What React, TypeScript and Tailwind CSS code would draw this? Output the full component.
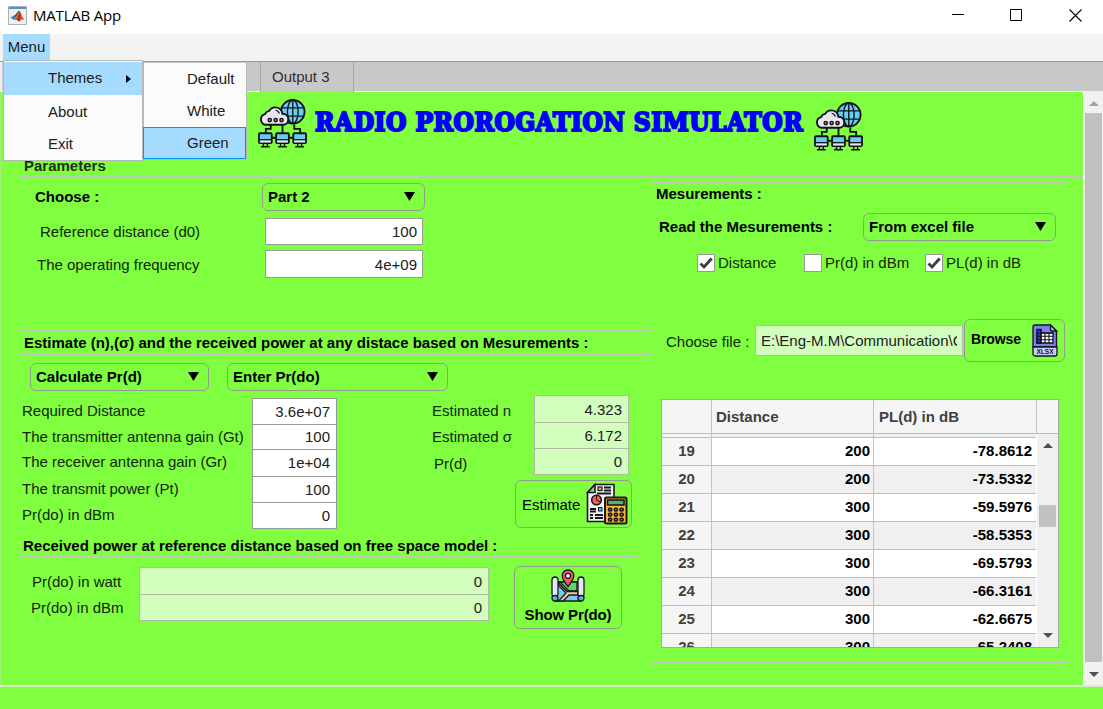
import type { ReactNode } from "react";

function NetworkIcon() {
  return (
    <svg width="49" height="49" viewBox="0 0 50 50" fill="none" stroke="#101418" strokeWidth="1.900" className="block">
      <circle cx="35.5" cy="13" r="12" fill="#68cdf0" />
      <ellipse cx="35.5" cy="13" rx="5.5" ry="12" strokeWidth="1.400" />
      <path d="M35.500 1v24M24 9h23M24 17.500h23" strokeWidth="1.400" />
      <path d="M8 26.300a5.500 5.500 0 0 1-.8-10.800 5.200 5.200 0 0 1 4.300-3.400c1.200-2.300 3.400-3.600 6-3.600 4.200 0 7 2.800 7.400 6.600 3.600 0 6 2.300 6 5.600 0 3.300-2.300 5.600-5.200 5.600z" fill="#e6e6f0" />
      <path d="M18 11.500c2 .3 3.300 1.500 3.800 3.500" strokeWidth="1.200" />
      <g fill="#e8685a" strokeWidth="1.400">
        <circle cx="12" cy="21.500" r="1.700" />
        <circle cx="18" cy="21.500" r="1.700" />
        <circle cx="24" cy="21.500" r="1.700" />
      </g>
      <path d="M13 26.500v4H8v5M25 26v9M37 26v4.500h6V35M14 39.500h24" />
      {[1, 18.5, 36].map((x) => (
        <g key={x}>
          <rect x={x} y="35" width="13" height="10" rx="1" fill="#68cdf0" />
          <path d={`M${x + 0.9} 42h11.200v2.300h-11.200z`} fill="#e6e6f0" stroke="none" />
          <path d={`M${x} 41.500h13`} strokeWidth="1.300" />
          <path d={`M${x + 4.5} 45v3.500M${x + 8.5} 45v3.500M${x + 2} 48.700h9`} strokeWidth="1.500" />
        </g>
      ))}
    </svg>
  );
}

function ReportIcon() {
  return (
    <svg width="42" height="42" viewBox="0 0 42 42" fill="none" stroke="#18181c" strokeWidth="1.600" className="block">
      <path d="M1.500 9.500 9 1.500h19v37h-26.500z" fill="#f1f1f4" />
      <path d="M1.500 9.500H9v-8z" fill="#b9b9c8" />
      <circle cx="10.500" cy="17" r="4.800" fill="#f25f54" />
      <path d="M10.500 17v-5M10.500 17l4 2" strokeWidth="1" />
      <path d="M18 4.500h7M18 7.500h7M11 10.500h14M4 26h6M4 28.500h6M4 32h3M9 32h8M9 35h8M4 35h3" strokeWidth="1.800" />
      <rect x="12" y="4" width="4" height="3.500" fill="#f0b53d" strokeWidth="1.200" />
      <rect x="12.500" y="24.500" width="3.500" height="3.500" fill="#68b7e6" strokeWidth="1" />
      <rect x="19" y="14.500" width="21.500" height="26" rx="1.500" fill="#f7b93b" strokeWidth="2" />
      <rect x="21.500" y="17" width="16.500" height="5" fill="#5fae6e" />
      {[26.5, 31.5, 36.5].map((y) =>
        [24, 29.8, 35.5].map((x) => (
          <rect key={`${x}-${y}`} x={x - 1.5} y={y - 1.3} width="3.200" height="2.800" rx="1" fill="#8b7444" strokeWidth="1.500" />
        ))
      )}
    </svg>
  );
}

function MapIcon() {
  return (
    <svg width="34" height="34" viewBox="0 0 34 34" fill="none" stroke="#16181d" strokeWidth="1.300" className="block">
      <path d="M4 13h26v19H4z" fill="#6cd0ee" />
      <path d="M8 13h18v9h-8l-8-8z" fill="#5fd46c" />
      <path d="M7 13.500l9 9h11v3.500h-9L12 32H7.500l7.500-8-8-8z" fill="#fac9a2" />
      <rect x="1" y="8" width="6" height="20" rx="3" fill="#e6e6f0" />
      <rect x="27" y="8" width="6" height="20" rx="3" fill="#e6e6f0" />
      <path d="M1 28.500c0 2 1.300 3.500 3 3.500s3-1.300 3-3-1.500-2.500-3-2.500-3 .5-3 2zM33 28.500c0 2-1.300 3.500-3 3.500s-3-1.300-3-3 1.500-2.500 3-2.500 3 .5 3 2z" fill="#4db9e4" />
      <path d="M17 17.500s-5.800-7-5.800-11A5.600 5.600 0 0 1 17 1a5.600 5.600 0 0 1 5.800 5.500c0 4-5.800 11-5.800 11z" fill="#f4536b" />
      <circle cx="17" cy="6.800" r="2.500" fill="#fff" />
    </svg>
  );
}

function XlsxIcon() {
  return (
    <svg width="26" height="33" viewBox="0 0 26 33" fill="none" stroke="#12131c" strokeWidth="1.300" className="block">
      <path d="M1 23V3a2 2 0 0 1 2-2h15.500l6 6v16z" fill="#7a80f0" />
      <path d="M18.500 1v4a2 2 0 0 0 2 2h4z" fill="#c5c8fa" />
      <path d="M5 9h16v10H5z" fill="#fff" />
      <path d="M5 5.500h4V19H5z" fill="#2d36d6" />
      <path d="M5 9h16M5 12.300h16M5 15.700h16M9 5.500V19M13 9v10M17 9v10" strokeWidth="1.100" />
      <path d="M1 23h24v7a2 2 0 0 1-2 2H3a2 2 0 0 1-2-2z" fill="#c9cbfb" />
      <text x="4.500" y="30.300" fontFamily="Liberation Sans, sans-serif" fontSize="7" fontWeight="700" fill="#12131c" stroke="none" textLength="17" lengthAdjust="spacingAndGlyphs">XLSX</text>
    </svg>
  );
}

function MatlabIcon() {
  return (
    <svg width="19" height="19" viewBox="0 0 19 19" className="block">
      <rect x=".5" y=".5" width="18" height="18" fill="#eef0f2" stroke="#a9b1b9" />
      <path d="M1 1h17v2H1z" fill="#4c93c9" />
      <path d="M2.500 11.500 6 9.600l2 2.200-2 2.200z" fill="#3a7dba" />
      <path d="M6 9.600c2.500-.6 3-4.600 5-5.100L8 11.800z" fill="#27507f" />
      <path d="M11 4.500c1.600.9 3 6.500 5.500 9.500-2-.9-3.500-.7-5 1.500-.8.700-1.600-2-3.500-1.500-1 0-1.300 0-2 0 3-1.400 3.500-7 5-9.500z" fill="#d9531e" />
      <path d="M11 4.500c.5 3 .2 7-1.500 9.500l2 1.500c-.3-4 .8-6 1-7z" fill="#8c1f13" />
    </svg>
  );
}

function Arrow({ className }: { className: string }) {
  return (
    <svg viewBox="0 0 10 9" preserveAspectRatio="none" className={className}>
      <path d="M0 0h10L5 9z" fill="currentColor" />
    </svg>
  );
}

function Select({ text, className }: { text: string; className: string }) {
  return (
    <div className={`flex h-[28px] shrink-0 items-center justify-between rounded-[6px] border border-[#949c90] pl-[5px] pr-[9px] font-bold ${className}`}>
      <span>{text}</span>
      <Arrow className="mb-[2px] h-[9px] w-[11px]" />
    </div>
  );
}

function Check({ label, on, className }: { label: string; on?: boolean; className: string }) {
  return (
    <div className={`flex h-[18px] items-center text-[#142808] ${className}`}>
      <span className="flex h-[18px] w-[18px] shrink-0 items-center justify-center border border-[#999] bg-white">
        {on && (
          <svg width="14" height="12" viewBox="0 0 14 12" fill="none" stroke="#3d3d3d" strokeWidth="2.800">
            <path d="M1.500 6.500 5 10 12.700 1.500" />
          </svg>
        )}
      </span>
      <span className="ml-[3px]">{label}</span>
    </div>
  );
}

function Label({ children, className }: { children: ReactNode; className: string }) {
  return <div className={`flex items-center whitespace-nowrap text-[#12250a] ${className}`}>{children}</div>;
}

const rows = [
  ["19", "200", "-78.8612"],
  ["20", "200", "-73.5332"],
  ["21", "300", "-59.5976"],
  ["22", "300", "-58.5353"],
  ["23", "300", "-69.5793"],
  ["24", "300", "-66.3161"],
  ["25", "300", "-62.6675"],
  ["26", "300", "-65.2408"],
];

function DataTable() {
  return (
    <div className="ml-[9px] flex h-[249px] w-[398px] flex-col overflow-hidden border border-[#a6a6a6] bg-[#f0f0f0] font-bold">
      <div className="flex h-[34px] shrink-0 border-b border-[#bdbdbd] bg-[#f5f5f5] text-[#404040]">
        <div className="w-[50px] border-r border-[#c4c4c4]" />
        <div className="flex w-[162px] items-center border-r border-[#c4c4c4] pl-[4px]">Distance</div>
        <div className="flex w-[163px] items-center border-r border-[#c4c4c4] pl-[5px]">PL(d) in dB</div>
      </div>
      <div className="flex min-h-0 flex-1">
        <div className="w-[374px] shrink-0 overflow-hidden">
          <div className="flex h-[4px] border-b border-[#bdbdbd]">
            <div className="w-[50px] border-r border-[#c4c4c4] bg-[#f5f5f5]" />
            <div className="w-[162px] border-r border-[#c4c4c4]" />
          </div>
          {rows.map(([id, distance, loss], i) => (
            <div key={id} className={`flex h-[28px] border-b border-[#bdbdbd] ${i % 2 ? "bg-[#f0f0f0]" : "bg-white"}`}>
              <div className="flex w-[50px] items-center justify-center border-r border-[#c4c4c4] bg-[#f5f5f5] pb-[2px] text-[#404040]">{id}</div>
              <div className="flex w-[162px] items-center justify-end border-r border-[#c4c4c4] pb-[2px] pr-[3px]">{distance}</div>
              <div className="flex flex-1 items-center justify-end pb-[2px] pr-[4px]">{loss}</div>
            </div>
          ))}
        </div>
        <div className="flex flex-1 flex-col items-center border-l border-white text-[#505050]">
          <Arrow className="mt-[9px] h-[5px] w-[10px] rotate-180" />
          <div className="mt-[57px] h-[22px] w-[17px] bg-[#c1c1c1]" />
          <Arrow className="mb-[9px] mt-auto h-[5px] w-[10px]" />
        </div>
      </div>
    </div>
  );
}

function Heading() {
  return (
    <header className="flex h-[61px] shrink-0">
      <div className="ml-[257px] mt-[7px] w-[57px]"><NetworkIcon /></div>
      <h1 className="mt-[15px] w-[499px] whitespace-nowrap font-['DejaVu_Serif_Condensed','DejaVu_Serif',serif] text-[26px] font-bold leading-[31px] tracking-[0.520px] text-[#0000ff] [-webkit-text-stroke:2px_#0000ff]">
        RADIO PROROGATION SIMULATOR
      </h1>
      <div className="mt-[10px]"><NetworkIcon /></div>
    </header>
  );
}

function Parameters() {
  return (
    <section className="flex h-[153px] flex-col pl-[15px] pt-[6px]">
      <div className="flex h-[28px] items-center">
        <Label className="w-[227px] font-bold text-black">Choose :</Label>
        <Select text="Part 2" className="w-[163px]" />
      </div>
      <div className="mt-[7px] flex h-[27px]">
        <Label className="w-[230px] pl-[5px]">Reference distance (d0)</Label>
        <div className="flex w-[158px] items-center justify-end border border-[#999] bg-white pr-[5px] text-[#202020]">100</div>
      </div>
      <div className="mt-[5px] flex h-[28px]">
        <Label className="w-[230px] pl-[2px] pt-[2px]">The operating frequency</Label>
        <div className="flex w-[158px] items-center justify-end border border-[#999] bg-white pr-[5px] pt-[2px] text-[#202020]">4e+09</div>
      </div>
    </section>
  );
}

function Estimation() {
  const box = "flex items-center justify-end border-b pr-[6px] text-[#202020]";
  return (
    <section className="h-[178px] pt-[8px]">
      <div className="flex pl-[10px]">
        <Select text="Calculate Pr(d)" className="w-[179px]" />
        <Select text="Enter Pr(do)" className="ml-[18px] w-[221px]" />
      </div>
      <div className="flex">
        <div className="mt-[7px] w-[232px] pl-[2px]">
          <Label className="h-[26px]">Required Distance</Label>
          <Label className="h-[25px]">The transmitter antenna gain (Gt)</Label>
          <Label className="h-[26px]">The receiver antenna gain (Gr)</Label>
          <Label className="h-[27px]">The transmit power (Pt)</Label>
          <Label className="h-[26px]">Pr(do) in dBm</Label>
        </div>
        <div className="mt-[7px] h-[131px] w-[85px] border border-b-0 border-[#999] bg-white">
          <div className={`${box} h-[26px] border-[#999]`}>3.6e+07</div>
          <div className={`${box} h-[25px] border-[#999]`}>100</div>
          <div className={`${box} h-[27px] border-[#999]`}>1e+04</div>
          <div className={`${box} h-[26px] border-[#999]`}>100</div>
          <div className={`${box} h-[26px] border-[#999]`}>0</div>
        </div>
        <div className="ml-[95px] mt-[7px] w-[102px]">
          <Label className="h-[26px]">Estimated n</Label>
          <Label className="h-[26px]">Estimated σ</Label>
          <Label className="h-[27px] pl-[2px]">Pr(d)</Label>
        </div>
        <div className="mt-[4px]">
          <div className="h-[80px] w-[95px] border border-b-0 border-[#b0bca6] bg-[#d2ffbe]">
            <div className={`${box} h-[27px] border-[#b0bca6] pt-[2px]`}>4.323</div>
            <div className={`${box} h-[26px] border-[#b0bca6]`}>6.172</div>
            <div className={`${box} h-[26px] border-[#b0bca6]`}>0</div>
          </div>
          <div className="-ml-[19px] mt-[5px] flex h-[48px] w-[117px] items-center rounded-[6px] border border-[#949c90] pl-[6px]">
            <span className="w-[64px] pt-[2px]">Estimate</span>
            <ReportIcon />
          </div>
        </div>
      </div>
    </section>
  );
}

function ReceivedPower() {
  return (
    <section className="h-[119px] w-[618px] border-b border-r border-t border-[#c3c9bd]">
      <h2 className="flex h-[23px] items-center whitespace-nowrap border-b border-[#c3c9bd] pl-[3px] pt-[2px] font-bold">
        Received power at reference distance based on free space model :
      </h2>
      <div className="flex">
        <div className="mt-[12px] w-[119px] pl-[12px]">
          <Label className="h-[26px]">Pr(do) in watt</Label>
          <Label className="-ml-[1px] h-[26px]">Pr(do) in dBm</Label>
        </div>
        <div className="mt-[10px] h-[54px] w-[350px] border border-[#b0bca6] bg-[#d2ffbe] text-[#202020]">
          <div className="flex h-[27px] items-center justify-end border-b border-[#b0bca6] pr-[6px] pt-[2px]">0</div>
          <div className="flex h-[25px] items-center justify-end pr-[6px]">0</div>
        </div>
        <div className="ml-[25px] mt-[9px] flex h-[63px] w-[108px] flex-col items-center rounded-[6px] border border-[#949c90] pt-[2px] font-bold">
          <MapIcon />
          <span className="mt-[3px] whitespace-nowrap leading-[17px] tracking-[-0.130px]">Show Pr(do)</span>
        </div>
      </div>
    </section>
  );
}

function Measurements() {
  return (
    <section className="mt-[5px] h-[481px] w-[417px] border-b border-r border-t border-[#c3c9bd]">
      <h2 className="flex h-[23px] items-center border-b border-[#c3c9bd] pl-[5px] font-bold">Mesurements :</h2>
      <div className="mt-[7px] flex h-[28px] items-center pl-[8px]">
        <span className="w-[204px] whitespace-nowrap font-bold">Read the Mesurements :</span>
        <Select text="From excel file" className="w-[193px]" />
      </div>
      <div className="mt-[13px] flex pl-[46px]">
        <Check label="Distance" on className="w-[107px]" />
        <Check label="Pr(d) in dBm" className="w-[121px]" />
        <Check label="PL(d) in dB" on className="w-[100px]" />
      </div>
      <div className="mt-[47px] flex h-[43px] items-center">
        <Label className="w-[104px] shrink-0 pl-[15px] pt-[2px]">Choose file :</Label>
        <div className="flex h-[31px] w-[208px] shrink-0 items-center border border-[#b0bca6] bg-[#d2ffbe] px-[5px] text-[#202020]">
          <span className="overflow-hidden whitespace-nowrap">E:\Eng-M.M\Communication\C</span>
        </div>
        <div className="ml-[1px] flex h-[43px] w-[101px] shrink-0 items-center justify-between rounded-[6px] border border-[#949c90] pl-[6px] pr-[6px] font-bold">
          <span className="pb-[3px] text-[14px] tracking-[-0.100px]">Browse</span>
          <XlsxIcon />
        </div>
      </div>
      <div className="mt-[37px] pl-px"><DataTable /></div>
    </section>
  );
}

function Menus() {
  return (
    <>
      <div className="absolute left-[3px] top-[60px] h-[101px] w-[140px] border border-[#b8b8b8] bg-[#fbfbfb] pt-px text-[#202020]">
        <div className="flex h-[33px] items-center justify-between bg-[#a4dbff] pb-px pl-[44px] pr-[11px] text-[#202020]">
          Themes
          <svg width="5" height="8" viewBox="0 0 5 8" className="mt-[2px]"><path d="M0 0v8l5-4z" /></svg>
        </div>
        <div className="flex h-[33px] items-center pl-[44px]">About</div>
        <div className="flex h-[32px] items-center pl-[44px]">Exit</div>
      </div>
      <div className="absolute left-[143px] top-[62px] h-[98px] w-[104px] border border-b-[#b8b8b8] border-l-[#b8b8b8] border-r-[#b8b8b8] border-t-[#c8c8c8] bg-[#fbfbfb] text-[#202020]">
        <div className="flex h-[32px] items-center pl-[43px]">Default</div>
        <div className="flex h-[32px] items-center pl-[43px]">White</div>
        <div className="-ml-px flex h-[32px] w-[103px] items-center border border-[#0094ff] bg-[#a4dbff] pl-[43px]">Green</div>
      </div>
    </>
  );
}

export default function App() {
  return (
    <div className="relative flex h-[709px] w-[1103px] flex-col overflow-hidden bg-[#80ff40] font-['Liberation_Sans',Arial,sans-serif] text-[15px] leading-[18px] text-black">
      <div className="flex h-[34px] shrink-0 items-center bg-white pl-[8px]">
        <div className="-mt-[3px]"><MatlabIcon /></div>
        <span className="-mt-[4px] ml-[6px] font-['Open_Sans','Noto_Sans',sans-serif] text-[15px] tracking-[-0.200px]">MATLAB App</span>
        <svg width="132" height="14" viewBox="0 0 132 14" fill="none" stroke="#000" className="-mt-[4px] ml-auto mr-[20px] block">
          <path d="M1 6.500h12M59.500 1.500h11v11h-11z" />
          <path d="M118.500 1.500l12 12M130.500 1.500l-12 12" strokeWidth="1.100" />
        </svg>
      </div>
      <div className="flex h-[28px] shrink-0 border-b border-[#999] bg-[#f3f3f3]">
        <div className="ml-[3px] flex h-[26px] w-[47px] items-center justify-center bg-[#a4dbff] text-[#202020]">Menu</div>
      </div>
      <div className="flex h-[30px] shrink-0 border-b border-[#f0f0f0] bg-[#c8c8c8]">
        <div className="w-[2px] bg-[#eeeeee]" />
        <div className="ml-[258px] flex h-[30px] w-[94px] items-center border-l border-r border-[#a6a6a6] bg-[#c8c8c8] pl-[11px] text-[#303030]">Output 3</div>
      </div>
      <div className="flex h-[593px] shrink-0 overflow-hidden">
        <main className="flex w-[1083px] shrink-0 flex-col border-l border-[#a5ef79]">
          <Heading />
          <div className="ml-[18px] flex h-[532px] flex-col border-l border-t border-[#c3c9bd]">
            <h2 className="flex h-[23px] shrink-0 items-center border-b border-[#c3c9bd] pl-[4px] pt-[2px] font-bold text-[#203016]">Parameters</h2>
            <div className="flex flex-1">
              <div className="w-[632px] shrink-0 border-r border-[#c3c9bd]">
                <Parameters />
                <h2 className="flex h-[25px] items-center whitespace-nowrap border-b border-t border-[#c3c9bd] pl-[4px] pt-[1px] font-bold">
                  Estimate (n),(σ) and the received power at any distace based on Mesurements :
                </h2>
                <Estimation />
                <ReceivedPower />
              </div>
              <div className="-ml-px"><Measurements /></div>
            </div>
          </div>
        </main>
        <div className="flex w-[20px] flex-col items-center border-l border-white bg-[#f1f1f1]">
          <Arrow className="mt-[9px] h-[5px] w-[10px] shrink-0 rotate-180 text-[#a3a3a3]" />
          <div className="mt-[7px] h-[549px] w-[17px] shrink-0 bg-[#c1c1c1]" />
          <Arrow className="mt-[10px] h-[5px] w-[10px] shrink-0 text-[#505050]" />
        </div>
      </div>
      <div className="flex-1 border-t-2 border-[#d8e8ce]" />
      <Menus />
    </div>
  );
}
